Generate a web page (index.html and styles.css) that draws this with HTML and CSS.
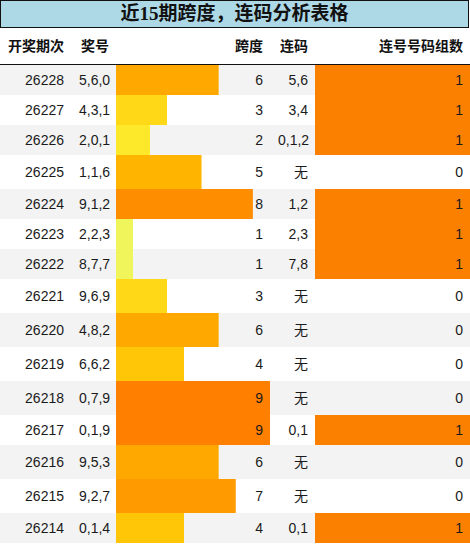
FILE: index.html
```html
<!DOCTYPE html>
<html lang="zh">
<head>
<meta charset="utf-8">
<link rel="stylesheet" href="styles.css">
</head>
<body>
<div class="title">近15期跨度，连码分析表格</div>
<table class="grid">
<colgroup><col class="c1"><col class="c2"><col class="c3"><col class="c4"><col class="c5"></colgroup>
<thead>
<tr><th class="first">开奖期次</th><th>奖号</th><th>跨度</th><th>连码</th><th>连号号码组数</th></tr>
</thead>
<tbody>
<tr><td>26228</td><td>5,6,0</td><td class="span v6" style="background-size:66.667% 100%">6</td><td>5,6</td><td class="hit">1</td></tr>
<tr><td>26227</td><td>4,3,1</td><td class="span v3" style="background-size:33.333% 100%">3</td><td>3,4</td><td class="hit">1</td></tr>
<tr><td>26226</td><td>2,0,1</td><td class="span v2" style="background-size:22.222% 100%">2</td><td>0,1,2</td><td class="hit">1</td></tr>
<tr class="tall"><td>26225</td><td>1,1,6</td><td class="span v5" style="background-size:55.556% 100%">5</td><td>无</td><td>0</td></tr>
<tr><td>26224</td><td>9,1,2</td><td class="span v8" style="background-size:88.889% 100%">8</td><td>1,2</td><td class="hit">1</td></tr>
<tr><td>26223</td><td>2,2,3</td><td class="span v1" style="background-size:11.111% 100%">1</td><td>2,3</td><td class="hit">1</td></tr>
<tr><td>26222</td><td>8,7,7</td><td class="span v1" style="background-size:11.111% 100%">1</td><td>7,8</td><td class="hit">1</td></tr>
<tr class="tall"><td>26221</td><td>9,6,9</td><td class="span v3" style="background-size:33.333% 100%">3</td><td>无</td><td>0</td></tr>
<tr class="tall"><td>26220</td><td>4,8,2</td><td class="span v6" style="background-size:66.667% 100%">6</td><td>无</td><td>0</td></tr>
<tr class="tall"><td>26219</td><td>6,6,2</td><td class="span v4" style="background-size:44.444% 100%">4</td><td>无</td><td>0</td></tr>
<tr class="tall"><td>26218</td><td>0,7,9</td><td class="span v9" style="background-size:100% 100%">9</td><td>无</td><td>0</td></tr>
<tr><td>26217</td><td>0,1,9</td><td class="span v9" style="background-size:100% 100%">9</td><td>0,1</td><td class="hit">1</td></tr>
<tr class="tall"><td>26216</td><td>9,5,3</td><td class="span v6" style="background-size:66.667% 100%">6</td><td>无</td><td>0</td></tr>
<tr class="tall"><td>26215</td><td>9,2,7</td><td class="span v7" style="background-size:77.778% 100%">7</td><td>无</td><td>0</td></tr>
<tr><td>26214</td><td>0,1,4</td><td class="span v4" style="background-size:44.444% 100%">4</td><td>0,1</td><td class="hit">1</td></tr>
</tbody>
</table>
</body>
</html>
```
FILE: styles.css
```css
html, body {
  margin: 0;
  padding: 0;
  background: #ffffff;
}

body {
  font-family: "Liberation Sans", "Noto Sans CJK SC", sans-serif;
  font-size: 14px;
  color: #1a1a1a;
}

.title {
  box-sizing: border-box;
  width: 469px;
  height: 28px;
  line-height: 26px;
  background: #add8e6;
  border: 1px solid #111;
  text-align: center;
  font-family: "Liberation Serif", "Noto Sans CJK SC", serif;
  font-weight: bold;
  font-size: 19px;
  color: #111;
}

.grid {
  width: 470px;
  table-layout: fixed;
  border-collapse: collapse;
}

.c1 { width: 71px; }
.c2 { width: 45px; }
.c3 { width: 154px; }
.c4 { width: 45px; }
.c5 { width: 155px; }

.grid th {
  padding: 8px 7px 8px 8px;
  line-height: 20px;
  font-weight: bold;
  text-align: right;
  border-bottom: 1px solid #111;
  white-space: nowrap;
  color: #111;
}

.grid th.first {
  text-align: left;
}

.grid td {
  padding: 7px 7px 7px 8px;
  line-height: 16px;
  text-align: right;
  white-space: nowrap;
}

.grid tr.tall td {
  line-height: 20px;
}

.grid tbody tr:nth-child(odd) td {
  background-color: #f3f3f3;
}

.grid tbody tr:nth-child(even) td {
  background-color: #ffffff;
}

.grid tbody tr td.span {
  background-repeat: no-repeat;
  background-position: left top;
}

.grid tbody tr td.v1 { background-image: linear-gradient(#f1f55c, #f1f55c); }
.grid tbody tr td.v2 { background-image: linear-gradient(#fde82a, #fde82a); }
.grid tbody tr td.v3 { background-image: linear-gradient(#ffd817, #ffd817); }
.grid tbody tr td.v4 { background-image: linear-gradient(#ffc608, #ffc608); }
.grid tbody tr td.v5 { background-image: linear-gradient(#ffb400, #ffb400); }
.grid tbody tr td.v6 { background-image: linear-gradient(#ffa900, #ffa900); }
.grid tbody tr td.v7 { background-image: linear-gradient(#ff9b00, #ff9b00); }
.grid tbody tr td.v8 { background-image: linear-gradient(#ff8d00, #ff8d00); }
.grid tbody tr td.v9 { background-image: linear-gradient(#ff8000, #ff8000); }

.grid tbody tr td.hit {
  background-color: #fc8000;
}
```
